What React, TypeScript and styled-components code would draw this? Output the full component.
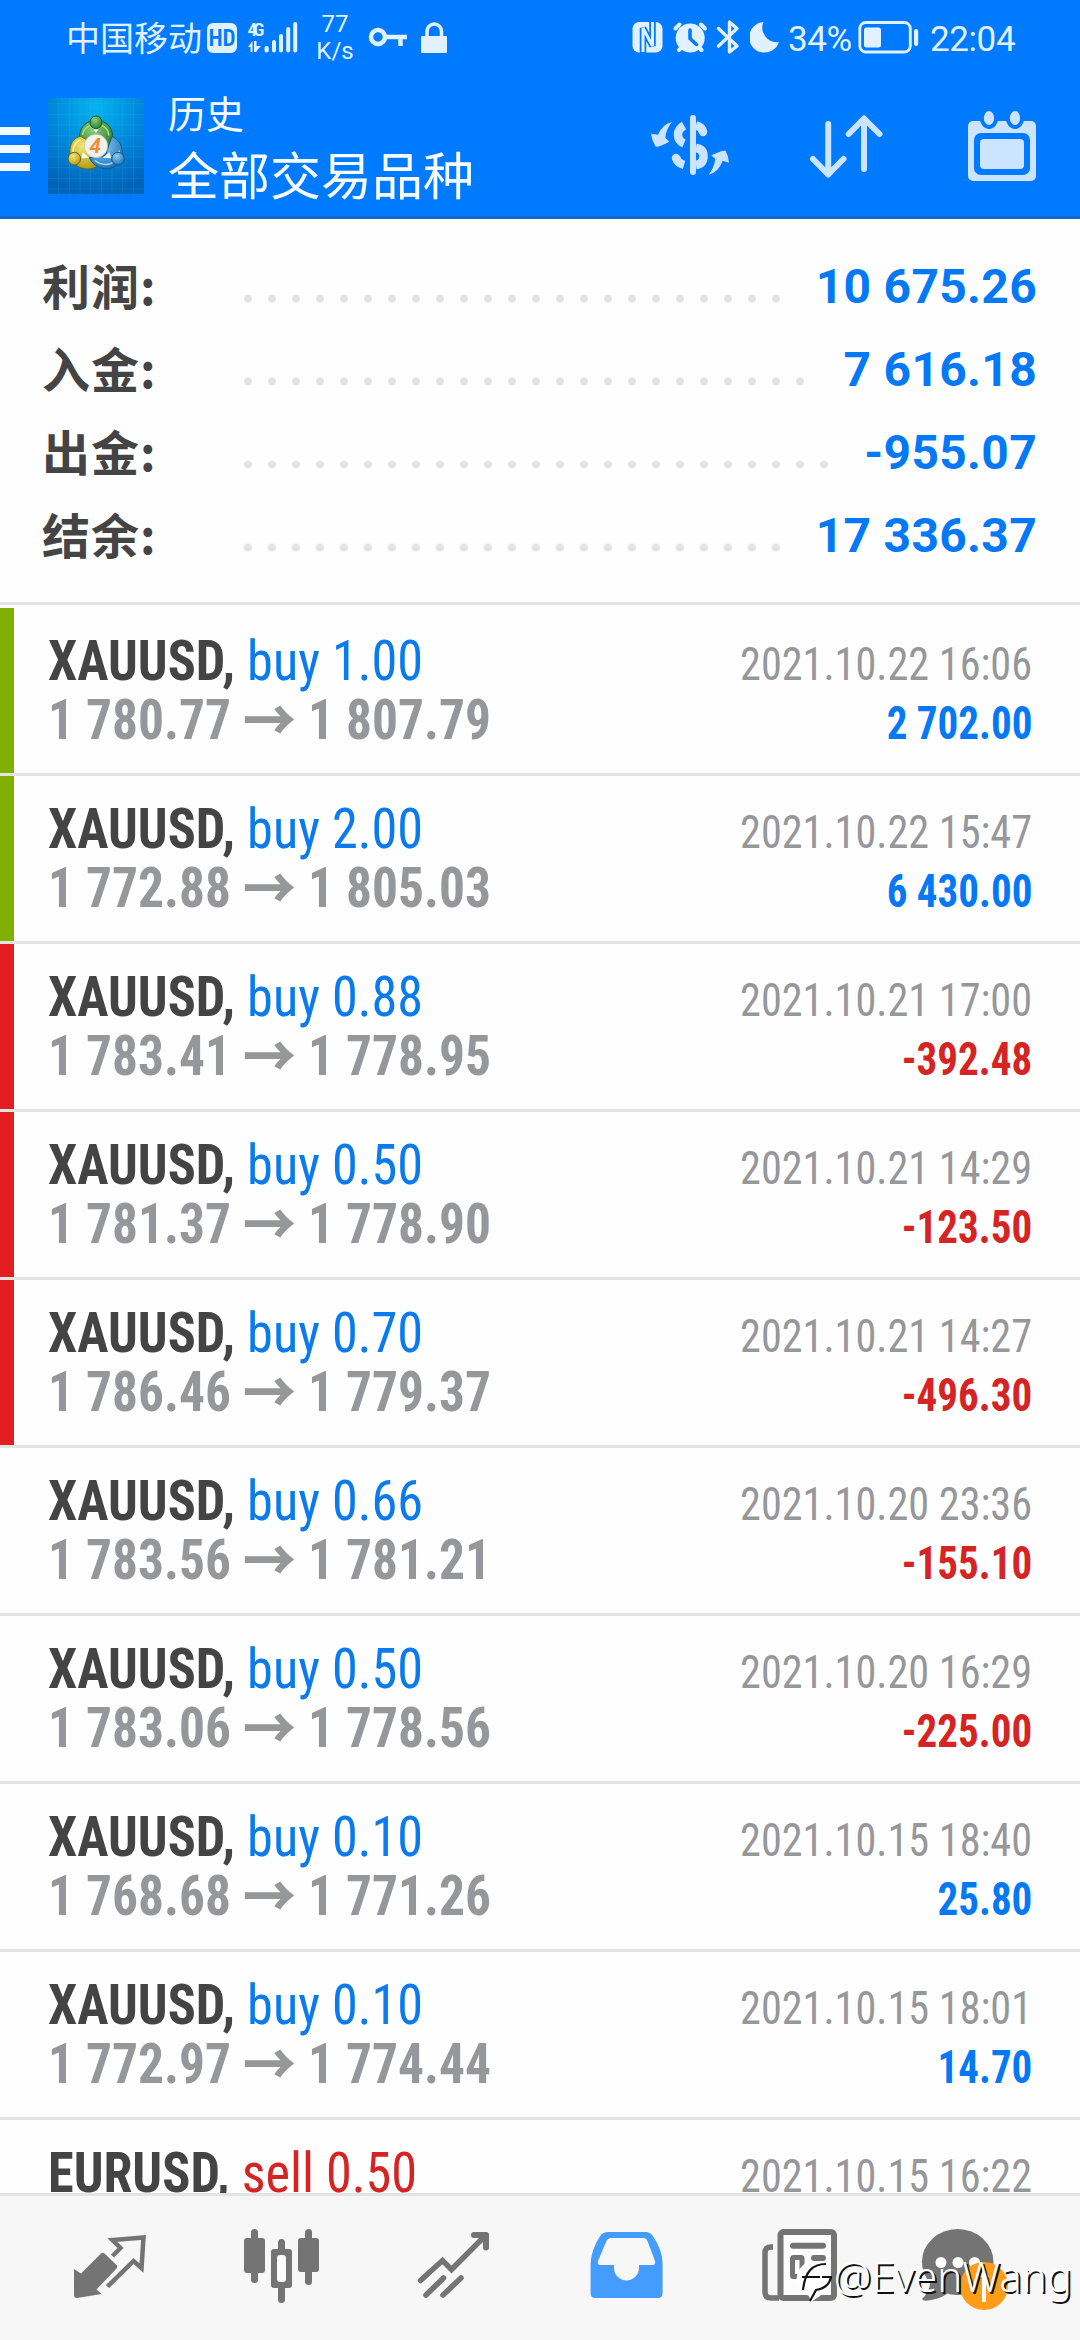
import React from "react";
import styled, { createGlobalStyle } from "styled-components";

const BLUE = "#007aff";
const PALE = "#e1f1ff";
const TOOL = "#cce4ff";
const LINE = "#e4e4e4";
const GREY = "#96979b";
const NAV = "#747474";
const CONDENSED = `"Roboto Condensed", Roboto, sans-serif`;
const CJK = `"Noto Sans CJK SC", sans-serif`;

const GlobalStyle = createGlobalStyle`
  body { margin: 0; background: #fff; font-family: Roboto, ${CJK}; }
  * { box-sizing: border-box; }
  svg { display: block; flex: none; }
`;

const Screen = styled.div`
  position: relative;
  display: flex;
  flex-direction: column;
  width: 1080px;
  height: 2340px;
  overflow: hidden;
  background: #fefefe;
`;

const Header = styled.header`
  flex: none;
  height: 219px;
  background: ${BLUE};
  border-bottom: 3px solid #1568cb;
`;

const StatusBar = styled.div`
  display: flex;
  align-items: center;
  justify-content: space-between;
  height: 76px;
  padding: 0 65px 0 66px;
  color: ${PALE};
`;

const StatusGroup = styled.div`
  display: flex;
  align-items: center;
`;

const Spaced = styled.div<{ $left: number }>`
  margin-left: ${(p) => p.$left}px;
`;

const Carrier = styled.span`
  padding-bottom: 4px;
  font: 400 34px ${CJK};
`;

const NetSpeed = styled.div`
  display: flex;
  flex-direction: column;
  align-items: center;
  width: 36px;
  margin-left: 18px;
  font-size: 24px;
  line-height: 27px;
`;

const StatusText = styled.span<{ $left: number; $width: number }>`
  width: ${(p) => p.$width}px;
  margin-left: ${(p) => p.$left}px;
  padding-top: 2px;
  font-size: 35px;
  line-height: 41px;
  letter-spacing: -0.4px;
  white-space: nowrap;
`;

const Toolbar = styled.div`
  display: flex;
  align-items: center;
  height: 140px;
`;

const MenuButton = styled.div`
  display: flex;
  flex-direction: column;
  gap: 10px;
  width: 30px;
  margin: 6px 18px 0 0;
`;

const MenuBar = styled.span`
  height: 8px;
  background: #f2f9ff;
`;

const Titles = styled.div`
  display: flex;
  flex-direction: column;
  align-self: flex-start;
  flex: 1;
  margin: 5px 0 0 24px;
  color: #f6fcff;
  font-family: ${CJK};
`;

const Section = styled.span`
  font-size: 38px;
  line-height: 61px;
`;

const Heading = styled.span`
  font-size: 51px;
  line-height: 62px;
`;

const Tools = styled.div`
  display: flex;
  gap: 77px;
  padding-right: 41px;
`;

const Summary = styled.section`
  flex: none;
  height: 386px;
  padding: 24px 43px 0 42px;
  border-bottom: 3px solid ${LINE};
`;

const SummaryRow = styled.div`
  display: flex;
  height: 83px;
`;

const Label = styled.span`
  width: 202px;
  color: #444;
  font: 700 48px/83px ${CJK};
  letter-spacing: 1px;
`;

const Dots = styled.span<{ $count: number }>`
  width: ${(p) => p.$count * 24}px;
  height: 9px;
  margin-top: 51px;
  background: radial-gradient(circle at 4px 4.5px, #e4e4e4 3.7px, transparent 4.4px) 0 0 / 24px 9px repeat-x;
`;

const Total = styled.span`
  margin: 2px 0 0 auto;
  color: #0579f5;
  font-weight: 700;
  font-size: 48px;
  line-height: 83px;
  letter-spacing: 0.3px;
`;

const Deals = styled.main`
  flex: 1;
  min-height: 0;
  padding-top: 3px;
  overflow: hidden;
`;

const Deal = styled.article<{ $mark?: string }>`
  display: flex;
  justify-content: space-between;
  height: 168px;
  padding: 24px 48px 0 35px;
  background: linear-gradient(${(p) => p.$mark || "transparent"} 0 0) 0 0 / 14px 165px no-repeat;
  border-bottom: 3px solid ${LINE};
`;

const Left = styled.div`
  display: flex;
  flex-direction: column;
  padding-left: 13px;
`;

const Right = styled.div`
  display: flex;
  flex-direction: column;
  align-items: flex-end;
  padding-top: 3px;
`;

const TextLine = styled.div<{ $squeeze: number; $side?: string }>`
  height: 59px;
  line-height: 59px;
  font-family: ${CONDENSED};
  white-space: nowrap;
  transform: scaleX(${(p) => p.$squeeze});
  transform-origin: ${(p) => p.$side || "left"} center;
`;

const SymbolLine = styled(TextLine)`
  color: #444;
  font-size: 55px;
  font-weight: 700;
`;

const Side = styled.span<{ $sell?: boolean }>`
  color: ${(p) => (p.$sell ? "#d42424" : "#0a7aef")};
  font-weight: 400;
`;

const PriceLine = styled(TextLine)`
  color: ${GREY};
  font-size: 55px;
  font-weight: 700;
`;

const Arrow = styled.span`
  font: 900 57px/0 ${CJK};
  vertical-align: -2px;
`;

const Stamp = styled(TextLine)`
  color: ${GREY};
  font-size: 46px;
`;

const Profit = styled(TextLine)<{ $loss: boolean }>`
  color: ${(p) => (p.$loss ? "#d42424" : "#0579f5")};
  font-size: 46px;
  font-weight: 700;
`;

const TabBar = styled.nav`
  display: flex;
  flex: none;
  height: 147px;
  padding: 0 24px;
  background: #f7f7f7;
  border-top: 3px solid ${LINE};
`;

const Tab = styled.div`
  display: flex;
  flex: 1;
  align-items: center;
  justify-content: center;
`;

const Watermark = styled.div`
  position: absolute;
  right: 8px;
  bottom: 36px;
  display: flex;
  align-items: center;
  gap: 2px;
  color: #fff;
  font: 300 42px/57px "Noto Sans", sans-serif;
  text-shadow: 2px 2px 0 #111;
`;

const WatermarkLogo = styled.svg`
  margin-top: 14px;
`;

// Status icons share one vertical band, 18..58 on the status bar.
const StatusIcon = ({ x, w, left, children }: { x: number; w: number; left: number; children: React.ReactNode }) => (
  <Spaced $left={left}>
    <svg width={w} height={40} viewBox={`${x} 18 ${w} 40`} fill={PALE}>
      {children}
    </svg>
  </Spaced>
);

const Logo = () => (
  <svg width="96" height="96" viewBox="24 27 288 288">
    <defs>
      <radialGradient id="sky" cx="0.5" cy="0.1" r="0.9">
        <stop offset="0" stopColor="#05b4ee" />
        <stop offset="0.5" stopColor="#0089dc" />
        <stop offset="1" stopColor="#0062b8" />
      </radialGradient>
      <radialGradient id="green" cx="0.4" cy="0.3" r="0.8">
        <stop offset="0" stopColor="#8fd077" />
        <stop offset="1" stopColor="#1c7429" />
      </radialGradient>
      <radialGradient id="gold" cx="0.4" cy="0.3" r="0.8">
        <stop offset="0" stopColor="#f3e874" />
        <stop offset="1" stopColor="#a8930f" />
      </radialGradient>
      <radialGradient id="azure" cx="0.4" cy="0.3" r="0.8">
        <stop offset="0" stopColor="#8fd0f4" />
        <stop offset="1" stopColor="#0f68ae" />
      </radialGradient>
    </defs>
    <rect x="24" y="27" width="288" height="288" fill="url(#sky)" />
    <path
      d="M56 27V315M88 27V315M120 27V315M152 27V315M184 27V315M216 27V315M248 27V315M280 27V315M24 44H312M24 76H312M24 108H312M24 140H312M24 172H312M24 204H312M24 236H312M24 268H312M24 300H312"
      stroke="#5cc4f4"
      strokeOpacity="0.22"
      strokeWidth="2"
    />
    <g strokeWidth="3">
      <path d="M168 94C196 94 216 112 218 140C219 160 210 172 194 182L142 182C126 170 118 156 119 138C121 112 142 94 168 94Z" fill="url(#green)" stroke="#1c5a33" />
      <path d="M128 138Q132 108 168 106Q204 108 207 140" fill="none" stroke="#a4dc94" strokeWidth="4" />
      <path d="M122 142C100 146 88 166 90 190C92 222 116 240 142 240C162 240 176 232 186 216L154 160Z" fill="url(#gold)" stroke="#6d6416" />
      <path d="M120 152Q98 164 99 190" fill="none" stroke="#f8f3a4" strokeWidth="5" />
      <path d="M216 142C238 152 250 172 246 200C240 228 218 242 194 239C172 236 156 224 148 206L196 200Z" fill="url(#azure)" stroke="#14568c" />
      <path d="M164 214Q186 232 212 224Q236 214 238 184" fill="none" stroke="#a6daf6" strokeWidth="4" />
      <path d="M128 190L148 206L124 208ZM208 190L188 206L214 208ZM158 118L168 132L178 118Z" fill="#f4faee" />
      <ellipse cx="168" cy="100" rx="18" ry="19" fill="url(#green)" stroke="#1c5a33" />
      <circle cx="103" cy="209" r="19" fill="url(#gold)" stroke="#6d6416" />
      <circle cx="234" cy="209" r="19" fill="url(#azure)" stroke="#14568c" />
    </g>
    <circle cx="168" cy="171" r="35" fill="#f3f1ee" stroke="#c5bfae" strokeWidth="2" />
    <text x="166" y="193" fontFamily="Roboto" fontSize="62" fontWeight="600" fontStyle="italic" textAnchor="middle" fill="#f28a30">
      4
    </text>
  </svg>
);

const CurrencyIcon = () => (
  <svg width="78" height="80" viewBox="651 106 78 80" fill="none" stroke={TOOL} strokeWidth="8.5">
    <path d="M693 118V172" strokeWidth="6" strokeLinecap="round" />
    <path d="M684 125.500Q678 129 678 134.500Q678 141 684 143.500" />
    <path d="M696 125.500Q702.500 127 703 132.500" />
    <circle cx="703" cy="132" r="4.200" fill={TOOL} stroke="none" />
    <path d="M696 148Q703.500 149 703.500 156Q703.500 164 696 165" />
    <path d="M676 157Q677 163 684 165" />
    <circle cx="676" cy="158" r="4.200" fill={TOOL} stroke="none" />
    <g transform="translate(640 100) scale(.33333)" fill={TOOL} stroke="none">
      <path d="M96 66Q68 72 54 104L33 101Q36 122 46 139Q52 144 88 125L76 113Q78 88 96 66Z" />
      <path d="M206 224Q236 216 248 182L267 188Q266 168 257 153Q250 148 214 166L226 177Q222 204 206 224Z" />
    </g>
  </svg>
);

const SortIcon = () => (
  <svg width="78" height="80" viewBox="806 106 78 80" fill="none" stroke={TOOL} strokeWidth="6" strokeLinecap="round" strokeLinejoin="round">
    <path d="M828.200 124V174M813 159L828.200 174.500L843.500 159" />
    <path d="M864 169V119M848.700 134L864 118.500L879.500 134" />
  </svg>
);

const CalendarIcon = () => (
  <svg width="78" height="80" viewBox="961 106 78 80">
    <rect x="968" y="121" width="68" height="60" rx="5" fill={TOOL} />
    <rect x="974" y="133" width="56" height="42" rx="7" fill={BLUE} />
    <rect x="980" y="139" width="44" height="30" rx="4" fill={TOOL} />
    {[989, 1015].map((x) => (
      <ellipse key={x} cx={x} cy="118" rx="7.200" ry="9" fill={TOOL} stroke={BLUE} strokeWidth="4" />
    ))}
  </svg>
);

const tabIcons: React.ReactNode[] = [
  <>
    <path d="M74 2269L81 2273.500L101 2253.500Q102.500 2252 104.500 2253.500L116.500 2265Q118 2267 116.500 2268.500L96.500 2289.500L101.500 2294L77 2298Q74 2298 74 2295Z" />
    <path d="M112.500 2256L120.500 2248L112.500 2240L143.500 2237.500L141.500 2268L133.500 2261L107.500 2286.500" fill="none" stroke={NAV} strokeWidth="4.500" />
  </>,
  <>
    <rect x="244" y="2238" width="21" height="35" rx="3" />
    <rect x="251" y="2229" width="7" height="54" rx="3.500" />
    <rect x="298" y="2238" width="21" height="34" rx="3" />
    <rect x="305" y="2229" width="7" height="56" rx="3.500" />
    <rect x="278" y="2239" width="7" height="64" rx="3.500" />
    <rect x="271" y="2249" width="21" height="39" rx="3" />
    <rect x="277" y="2255" width="9" height="27" rx="3" fill="#fcfcfc" />
  </>,
  <g fill="none" stroke={NAV} strokeWidth="5.500" strokeLinecap="round">
    <path d="M420.500 2280.500L442.500 2260.500L451.500 2269.500L485.500 2235.500" />
    <path d="M474 2235H486V2247.500" strokeWidth="6" strokeLinejoin="round" />
    <path d="M426 2295L443.500 2278M443 2295L461 2278" />
  </g>,
  <path
    fill="#459cff"
    fillRule="evenodd"
    d="M608 2232H646Q650 2232 652.500 2235.500Q662.600 2250 662.600 2264V2293Q662.600 2298 658 2298H595Q590.600 2298 590.600 2293V2264Q591 2250 600.500 2235.500Q603 2232 608 2232ZM611 2238Q608 2238 606.500 2241L598 2261Q597 2265 600 2265H614V2268A12.500 12.500 0 0 0 639 2268V2265H652Q656 2265 655 2261L647.500 2241Q646.500 2238 643 2238Z"
  />,
  <g fill="none" stroke={NAV}>
    <rect x="780.500" y="2232" width="53.500" height="66" rx="3" strokeWidth="6" fill="#fcfcfc" />
    <path d="M773 2247H771Q765 2247 765 2253V2292Q765 2298 771 2298H779" strokeWidth="5.500" />
    <path d="M793 2245.700H823M814 2258H823M814 2276.500H823" strokeWidth="6" strokeLinecap="round" />
    <rect x="792.500" y="2257.500" width="9.500" height="19" rx="1" strokeWidth="5" />
  </g>,
  <>
    <ellipse cx="957.700" cy="2262" rx="35.800" ry="33" />
    <path d="M930 2280Q931 2290 922 2299Q923 2302 931 2300Q943 2298 949 2292Z" />
    {[941, 958, 974.6].map((x) => (
      <circle key={x} cx={x} cy="2262.500" r="5.500" fill="#fff" />
    ))}
    <circle cx="984" cy="2286" r="24" fill="#ff9c1a" />
    <path d="M984 2268L989 2277H986V2302H982V2277H979Z" fill="#fff" />
  </>,
];

const totals: [string, number, string][] = [
  ["利润:", 23, "10 675.26"],
  ["入金:", 24, "7 616.18"],
  ["出金:", 25, "-955.07"],
  ["结余:", 23, "17 336.37"],
];

type DealData = { symbol: string; side: string; open: string; close: string; at: string; profit: string; mark?: "tp" | "sl" };

const buy = (volume: string, open: string, close: string, at: string, profit: string, mark?: "tp" | "sl"): DealData => ({
  symbol: "XAUUSD",
  side: `buy ${volume}`,
  open,
  close,
  at: `2021.10.${at}`,
  profit,
  mark,
});

const deals: DealData[] = [
  buy("1.00", "1 780.77", "1 807.79", "22 16:06", "2 702.00", "tp"),
  buy("2.00", "1 772.88", "1 805.03", "22 15:47", "6 430.00", "tp"),
  buy("0.88", "1 783.41", "1 778.95", "21 17:00", "-392.48", "sl"),
  buy("0.50", "1 781.37", "1 778.90", "21 14:29", "-123.50", "sl"),
  buy("0.70", "1 786.46", "1 779.37", "21 14:27", "-496.30", "sl"),
  buy("0.66", "1 783.56", "1 781.21", "20 23:36", "-155.10"),
  buy("0.50", "1 783.06", "1 778.56", "20 16:29", "-225.00"),
  buy("0.10", "1 768.68", "1 771.26", "15 18:40", "25.80"),
  buy("0.10", "1 772.97", "1 774.44", "15 18:01", "14.70"),
];

const marks = { tp: "#7fb000", sl: "#e31e20" };

export default function App() {
  return (
    <Screen>
      <GlobalStyle />
      <Header>
        <StatusBar>
          <StatusGroup>
            <Carrier>中国移动</Carrier>
            <StatusIcon x={206} w={32} left={4}>
              <rect x="207" y="23" width="30" height="30" rx="6" />
              <text x="222" y="46" fontFamily="Roboto Condensed" fontSize="23" fontWeight="600" textAnchor="middle" fill={BLUE}>
                HD
              </text>
            </StatusIcon>
            <StatusIcon x={247} w={52} left={9}>
              <text x="247.500" y="36" fontFamily="Roboto Condensed" fontSize="19" fontWeight="600" textLength="17">
                4G
              </text>
              <path d="M248 47L252.500 41V52H250.500V47ZM254 41V52H256.500V51L261 46H256.500V41Z" />
              <rect x="264.500" y="46" width="4.200" height="6.500" rx="2" />
              <rect x="272" y="40" width="4" height="12.500" rx="2" />
              <rect x="279" y="34" width="4" height="18.500" rx="2" />
              <rect x="286.200" y="27" width="4" height="25.500" rx="2" />
              <rect x="293.200" y="22" width="4" height="30.500" rx="2" />
            </StatusIcon>
            <NetSpeed>
              <span>77</span>
              <span>K/s</span>
            </NetSpeed>
            <StatusIcon x={368} w={40} left={15}>
              <g fill="none" stroke={PALE} strokeWidth="4.500">
                <circle cx="378" cy="37" r="7" />
                <path d="M386 37H407M400.500 37V46" />
              </g>
            </StatusIcon>
            <StatusIcon x={420} w={28} left={12}>
              <rect x="421" y="36" width="26" height="17" rx="1" />
              <path d="M427 37V31.500A7.200 7.500 0 0 1 441.500 31.500V37" fill="none" stroke={PALE} strokeWidth="3.500" />
            </StatusIcon>
          </StatusGroup>
          <StatusGroup>
            <StatusIcon x={631} w={33} left={0}>
              <rect x="632.500" y="22" width="30" height="30.500" rx="6.500" />
              <g fill="none" strokeLinejoin="miter">
                <path d="M643 54V28L652.500 46V20" stroke={BLUE} strokeWidth="6.500" />
                <path d="M643 52V28L652.500 46V22" stroke={PALE} strokeWidth="3" />
              </g>
            </StatusIcon>
            <StatusIcon x={673} w={35} left={9}>
              <circle cx="690.200" cy="38" r="14.500" />
              <g fill="none" stroke={PALE} strokeWidth="4" strokeLinecap="round">
                <path d="M675.500 28.500L679.500 24.500M705 28.500L701 24.500M679 50L682 47M701.500 50L698.500 47" />
                <path d="M690 30V38.500L696.500 44.500" stroke={BLUE} strokeWidth="3.500" />
              </g>
            </StatusIcon>
            <StatusIcon x={716} w={25} left={8}>
              <path d="M718.500 28.500L737 46L729.500 52V22L737 28.500L718.500 46" fill="none" stroke={PALE} strokeWidth="3.400" strokeLinecap="round" strokeLinejoin="round" />
            </StatusIcon>
            <StatusIcon x={750} w={30} left={9}>
              <path d="M763.500 22A15.300 15.300 0 1 0 779 42A14.500 14.500 0 0 1 763.500 22Z" />
            </StatusIcon>
            <StatusText $left={8} $width={65}>
              34%
            </StatusText>
            <StatusIcon x={858} w={61} left={5}>
              <rect x="859.800" y="22.500" width="50.500" height="29.500" rx="6" fill="none" stroke={PALE} strokeWidth="2.800" />
              <rect x="864" y="27.500" width="17" height="20" rx="2.500" />
              <rect x="914" y="29" width="4.200" height="17" rx="2" />
            </StatusIcon>
            <StatusText $left={11} $width={85}>
              22:04
            </StatusText>
          </StatusGroup>
        </StatusBar>
        <Toolbar>
          <MenuButton>
            <MenuBar />
            <MenuBar />
            <MenuBar />
          </MenuButton>
          <Logo />
          <Titles>
            <Section>历史</Section>
            <Heading>全部交易品种</Heading>
          </Titles>
          <Tools>
            <CurrencyIcon />
            <SortIcon />
            <CalendarIcon />
          </Tools>
        </Toolbar>
      </Header>

      <Summary>
        {totals.map(([label, dots, value]) => (
          <SummaryRow key={label}>
            <Label>{label}</Label>
            <Dots $count={dots} />
            <Total>{value}</Total>
          </SummaryRow>
        ))}
      </Summary>

      <Deals>
        {deals.map((d) => (
          <Deal key={d.at} $mark={d.mark && marks[d.mark]}>
            <Left>
              <SymbolLine $squeeze={0.95}>
                {d.symbol}, <Side>{d.side}</Side>
              </SymbolLine>
              <PriceLine $squeeze={0.936}>
                {d.open} <Arrow>→</Arrow> {d.close}
              </PriceLine>
            </Left>
            <Right>
              <Stamp $squeeze={0.918} $side="right">
                {d.at}
              </Stamp>
              <Profit $squeeze={0.892} $side="right" $loss={d.profit.startsWith("-")}>
                {d.profit}
              </Profit>
            </Right>
          </Deal>
        ))}
        <Deal>
          <Left>
            <SymbolLine $squeeze={0.95}>
              EURUSD, <Side $sell>sell 0.50</Side>
            </SymbolLine>
          </Left>
          <Right>
            <Stamp $squeeze={0.918} $side="right">
              2021.10.15 16:22
            </Stamp>
          </Right>
        </Deal>
      </Deals>

      <TabBar>
        {tabIcons.map((icon, i) => (
          <Tab key={i}>
            <svg width="100" height="100" viewBox={`${60 + i * 172} 2218 100 100`} fill={NAV}>
              {icon}
            </svg>
          </Tab>
        ))}
      </TabBar>

      <Watermark>
        <WatermarkLogo width="37" height="44" viewBox="797 2261 37 44">
          <path d="M815 2262A18 18 0 0 1 833 2280C833 2291 822 2297 813 2303L811 2297A18 18 0 0 1 815 2262Z" fill="#fff" />
          <path d="M805 2291C807 2273 814 2265 828 2265M804 2278H822M812 2302L818 2291Q831 2289 833 2278H824" fill="none" stroke="#111" strokeWidth="2.200" />
        </WatermarkLogo>
        <span>@EvenWang</span>
      </Watermark>
    </Screen>
  );
}
